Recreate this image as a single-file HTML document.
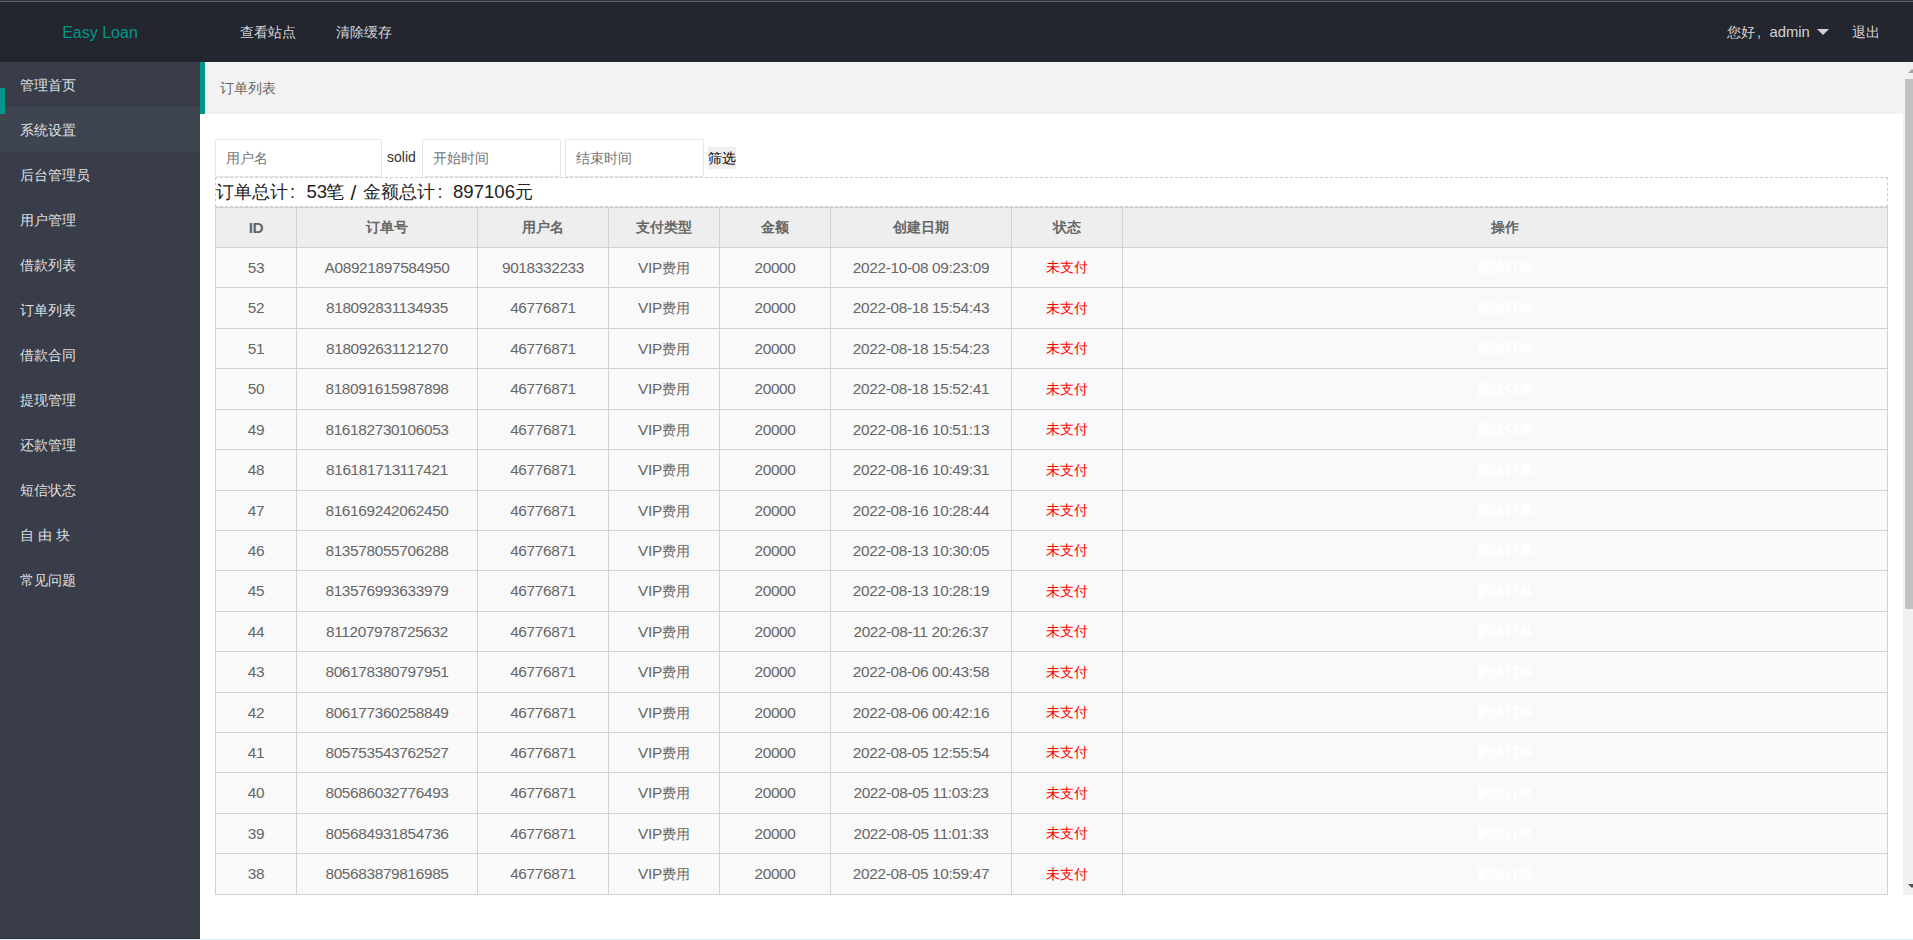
<!DOCTYPE html>
<html><head><meta charset="utf-8"><title>Easy Loan</title>
<style>
*{margin:0;padding:0;box-sizing:border-box;}
html,body{width:1913px;height:940px;overflow:hidden;background:#fff;font-family:"Liberation Sans",sans-serif;font-size:14px;color:#666;}
.abs{position:absolute;}
.topline{position:absolute;left:0;top:0;width:1913px;height:2px;background:#323338;}
.topline2{position:absolute;left:0;top:1px;width:1913px;height:1px;background:#606167;}
.header{position:absolute;left:0;top:2px;width:1913px;height:60px;background:#23262e;}
.logo{position:absolute;left:0;top:1px;width:200px;height:60px;line-height:60px;text-align:center;color:#009688;font-size:16px;}
.nav{position:absolute;top:0;height:60px;line-height:60px;color:rgba(255,255,255,.82);font-size:14px;white-space:nowrap;}
.caret{position:absolute;left:1817px;top:29px;width:0;height:0;border-left:6px solid transparent;border-right:6px solid transparent;border-top:6px solid rgba(255,255,255,.8);}
.side{position:absolute;left:0;top:62px;width:200px;height:878px;background:#393d49;}
.side .item{height:45px;line-height:47px;padding-left:20px;color:rgba(255,255,255,.85);font-size:14px;white-space:nowrap;}
.side .item.hl{background:#3f4451;}
.sidebar-mark{position:absolute;left:0;top:88px;width:5px;height:26px;background:#009688;}
.crumb{position:absolute;left:200px;top:62px;width:1703px;height:52px;background:#f2f2f2;border-left:5px solid #009688;}
.crumb span{position:absolute;left:15px;top:0;line-height:52px;color:#666;font-size:14px;}
.inp{position:absolute;top:139px;height:38px;border:1px solid #e6e6e6;border-radius:2px;background:#fff;}
.inp span{position:absolute;left:10px;top:0;line-height:37px;color:#757575;font-size:14px;white-space:nowrap;}
.solid{position:absolute;left:387px;top:146px;line-height:22px;color:#333;font-size:14px;}
.btn{position:absolute;left:708px;top:147px;width:28px;height:22px;background:#efefef;color:#000;font-size:14px;line-height:22px;text-align:center;}
.dash{position:absolute;left:215px;top:177px;width:1673px;height:30px;border:1px dashed #ccc;}
.total{position:absolute;top:178px;line-height:28px;color:#222;font-size:18px;white-space:nowrap;}
.total.n{font-size:18.6px;}
.thead{position:absolute;left:215px;width:1673px;background:#eee;}
.tbody{position:absolute;left:215px;width:1673px;background:#f9f9f9;}
.hline{position:absolute;left:215px;width:1673px;height:1px;background:#d2d2d2;}
.vl{position:absolute;width:1px;background:#d2d2d2;}
.th{position:absolute;text-align:center;font-weight:bold;color:#666;white-space:nowrap;}
.td{position:absolute;text-align:center;color:#666;white-space:nowrap;}
.red{color:#f00;}
.op{color:#fff;font-size:14px;font-weight:bold;}
.num{font-size:15.4px;letter-spacing:-0.35px;}
.sb-track{position:absolute;left:1903px;top:62px;width:17px;height:833px;background:#f1f1f1;}
.sb-thumb{position:absolute;left:1905px;top:79px;width:13px;height:530px;background:#c1c1c1;}
.sb-up{position:absolute;left:1908px;top:69px;width:0;height:0;border-left:4px solid transparent;border-right:4px solid transparent;border-bottom:4px solid #a3a3a3;}
.sb-down{position:absolute;left:1908px;top:884px;width:0;height:0;border-left:4px solid transparent;border-right:4px solid transparent;border-top:4px solid #505050;}
.bottomline{position:absolute;left:0;top:939px;width:1913px;height:1px;background:#d8edf3;}
.sidebottom{position:absolute;left:0;top:938px;width:200px;height:1px;background:#30333e;}
</style></head>
<body>
<div class="topline"></div><div class="topline2"></div>
<div class="header">
  <div class="logo">Easy Loan</div>
  <div class="nav" style="left:240px">查看站点</div>
  <div class="nav" style="left:336px">清除缓存</div>
  <div class="nav" style="left:1727px">您好<span style="display:inline-block;width:14.5px;padding-left:2px">,</span><span style="font-size:14.8px">admin</span></div>
  <div class="nav" style="left:1852px">退出</div>
</div>
<div class="caret"></div>
<div class="side">
  <div class="item">管理首页</div>
  <div class="item hl">系统设置</div>
  <div class="item">后台管理员</div>
  <div class="item">用户管理</div>
  <div class="item">借款列表</div>
  <div class="item">订单列表</div>
  <div class="item">借款合同</div>
  <div class="item">提现管理</div>
  <div class="item">还款管理</div>
  <div class="item">短信状态</div>
  <div class="item">自 由 块</div>
  <div class="item">常见问题</div>
</div>
<div class="sidebar-mark"></div>
<div class="crumb"><span>订单列表</span></div>
<div class="inp" style="left:215px;width:167px"><span>用户名</span></div>
<div class="solid">solid</div>
<div class="inp" style="left:422px;width:139px"><span>开始时间</span></div>
<div class="inp" style="left:565px;width:139px"><span>结束时间</span></div>
<div class="btn">筛选</div>
<div class="dash"></div>
<div class="total" style="left:216px">订单总计</div>
<div class="total" style="left:290px">:</div>
<div class="total n" style="left:306.5px">53</div>
<div class="total" style="left:326px">笔</div>
<div class="total" style="left:350.5px;font-size:21px;top:179px">/</div>
<div class="total" style="left:362.5px">金额总计</div>
<div class="total" style="left:437.5px">:</div>
<div class="total n" style="left:453px">897106</div>
<div class="total" style="left:515px">元</div>
<div class="sb-track"></div><div class="sb-thumb"></div><div class="sb-up"></div><div class="sb-down"></div>
<div class="sidebottom"></div><div class="bottomline"></div>
<div class="tbl">
<div class="thead" style="top:207px;height:40px"></div>
<div class="tbody" style="top:247px;height:647px"></div>
<div class="hline" style="top:207px"></div>
<div class="hline" style="top:247px"></div>
<div class="hline" style="top:287px"></div>
<div class="hline" style="top:328px"></div>
<div class="hline" style="top:368px"></div>
<div class="hline" style="top:409px"></div>
<div class="hline" style="top:449px"></div>
<div class="hline" style="top:490px"></div>
<div class="hline" style="top:530px"></div>
<div class="hline" style="top:570px"></div>
<div class="hline" style="top:611px"></div>
<div class="hline" style="top:651px"></div>
<div class="hline" style="top:692px"></div>
<div class="hline" style="top:732px"></div>
<div class="hline" style="top:772px"></div>
<div class="hline" style="top:813px"></div>
<div class="hline" style="top:853px"></div>
<div class="hline" style="top:894px"></div>
<div class="vl" style="left:215px;top:207px;height:688px"></div>
<div class="vl" style="left:296px;top:207px;height:688px"></div>
<div class="vl" style="left:477px;top:207px;height:688px"></div>
<div class="vl" style="left:608px;top:207px;height:688px"></div>
<div class="vl" style="left:719px;top:207px;height:688px"></div>
<div class="vl" style="left:830px;top:207px;height:688px"></div>
<div class="vl" style="left:1011px;top:207px;height:688px"></div>
<div class="vl" style="left:1122px;top:207px;height:688px"></div>
<div class="vl" style="left:1887px;top:207px;height:688px"></div>
<div class="th" style="left:216px;width:80px;top:207px;height:40px;line-height:41px"><span class="num">ID</span></div>
<div class="th" style="left:297px;width:180px;top:207px;height:40px;line-height:41px">订单号</div>
<div class="th" style="left:478px;width:130px;top:207px;height:40px;line-height:41px">用户名</div>
<div class="th" style="left:609px;width:110px;top:207px;height:40px;line-height:41px">支付类型</div>
<div class="th" style="left:720px;width:110px;top:207px;height:40px;line-height:41px">金额</div>
<div class="th" style="left:831px;width:180px;top:207px;height:40px;line-height:41px">创建日期</div>
<div class="th" style="left:1012px;width:110px;top:207px;height:40px;line-height:41px">状态</div>
<div class="th" style="left:1123px;width:764px;top:207px;height:40px;line-height:41px">操作</div>
<div class="td" style="left:216px;width:80px;top:247px;height:41px;line-height:41px"><span class="num">53</span></div>
<div class="td" style="left:297px;width:180px;top:247px;height:41px;line-height:41px"><span class="num">A08921897584950</span></div>
<div class="td" style="left:478px;width:130px;top:247px;height:41px;line-height:41px"><span class="num">9018332233</span></div>
<div class="td" style="left:609px;width:110px;top:247px;height:41px;line-height:41px"><span class="num">VIP</span>费用</div>
<div class="td" style="left:720px;width:110px;top:247px;height:41px;line-height:41px"><span class="num">20000</span></div>
<div class="td" style="left:831px;width:180px;top:247px;height:41px;line-height:41px"><span class="num">2022-10-08 09:23:09</span></div>
<div class="td" style="left:1012px;width:110px;top:247px;height:41px;line-height:41px"><span class="red">未支付</span></div>
<div class="td" style="left:1123px;width:764px;top:247px;height:41px;line-height:41px"><span class="op">删除订单</span></div>
<div class="td" style="left:216px;width:80px;top:287px;height:42px;line-height:42px"><span class="num">52</span></div>
<div class="td" style="left:297px;width:180px;top:287px;height:42px;line-height:42px"><span class="num">818092831134935</span></div>
<div class="td" style="left:478px;width:130px;top:287px;height:42px;line-height:42px"><span class="num">46776871</span></div>
<div class="td" style="left:609px;width:110px;top:287px;height:42px;line-height:42px"><span class="num">VIP</span>费用</div>
<div class="td" style="left:720px;width:110px;top:287px;height:42px;line-height:42px"><span class="num">20000</span></div>
<div class="td" style="left:831px;width:180px;top:287px;height:42px;line-height:42px"><span class="num">2022-08-18 15:54:43</span></div>
<div class="td" style="left:1012px;width:110px;top:287px;height:42px;line-height:42px"><span class="red">未支付</span></div>
<div class="td" style="left:1123px;width:764px;top:287px;height:42px;line-height:42px"><span class="op">删除订单</span></div>
<div class="td" style="left:216px;width:80px;top:328px;height:41px;line-height:41px"><span class="num">51</span></div>
<div class="td" style="left:297px;width:180px;top:328px;height:41px;line-height:41px"><span class="num">818092631121270</span></div>
<div class="td" style="left:478px;width:130px;top:328px;height:41px;line-height:41px"><span class="num">46776871</span></div>
<div class="td" style="left:609px;width:110px;top:328px;height:41px;line-height:41px"><span class="num">VIP</span>费用</div>
<div class="td" style="left:720px;width:110px;top:328px;height:41px;line-height:41px"><span class="num">20000</span></div>
<div class="td" style="left:831px;width:180px;top:328px;height:41px;line-height:41px"><span class="num">2022-08-18 15:54:23</span></div>
<div class="td" style="left:1012px;width:110px;top:328px;height:41px;line-height:41px"><span class="red">未支付</span></div>
<div class="td" style="left:1123px;width:764px;top:328px;height:41px;line-height:41px"><span class="op">删除订单</span></div>
<div class="td" style="left:216px;width:80px;top:368px;height:42px;line-height:42px"><span class="num">50</span></div>
<div class="td" style="left:297px;width:180px;top:368px;height:42px;line-height:42px"><span class="num">818091615987898</span></div>
<div class="td" style="left:478px;width:130px;top:368px;height:42px;line-height:42px"><span class="num">46776871</span></div>
<div class="td" style="left:609px;width:110px;top:368px;height:42px;line-height:42px"><span class="num">VIP</span>费用</div>
<div class="td" style="left:720px;width:110px;top:368px;height:42px;line-height:42px"><span class="num">20000</span></div>
<div class="td" style="left:831px;width:180px;top:368px;height:42px;line-height:42px"><span class="num">2022-08-18 15:52:41</span></div>
<div class="td" style="left:1012px;width:110px;top:368px;height:42px;line-height:42px"><span class="red">未支付</span></div>
<div class="td" style="left:1123px;width:764px;top:368px;height:42px;line-height:42px"><span class="op">删除订单</span></div>
<div class="td" style="left:216px;width:80px;top:409px;height:41px;line-height:41px"><span class="num">49</span></div>
<div class="td" style="left:297px;width:180px;top:409px;height:41px;line-height:41px"><span class="num">816182730106053</span></div>
<div class="td" style="left:478px;width:130px;top:409px;height:41px;line-height:41px"><span class="num">46776871</span></div>
<div class="td" style="left:609px;width:110px;top:409px;height:41px;line-height:41px"><span class="num">VIP</span>费用</div>
<div class="td" style="left:720px;width:110px;top:409px;height:41px;line-height:41px"><span class="num">20000</span></div>
<div class="td" style="left:831px;width:180px;top:409px;height:41px;line-height:41px"><span class="num">2022-08-16 10:51:13</span></div>
<div class="td" style="left:1012px;width:110px;top:409px;height:41px;line-height:41px"><span class="red">未支付</span></div>
<div class="td" style="left:1123px;width:764px;top:409px;height:41px;line-height:41px"><span class="op">删除订单</span></div>
<div class="td" style="left:216px;width:80px;top:449px;height:42px;line-height:42px"><span class="num">48</span></div>
<div class="td" style="left:297px;width:180px;top:449px;height:42px;line-height:42px"><span class="num">816181713117421</span></div>
<div class="td" style="left:478px;width:130px;top:449px;height:42px;line-height:42px"><span class="num">46776871</span></div>
<div class="td" style="left:609px;width:110px;top:449px;height:42px;line-height:42px"><span class="num">VIP</span>费用</div>
<div class="td" style="left:720px;width:110px;top:449px;height:42px;line-height:42px"><span class="num">20000</span></div>
<div class="td" style="left:831px;width:180px;top:449px;height:42px;line-height:42px"><span class="num">2022-08-16 10:49:31</span></div>
<div class="td" style="left:1012px;width:110px;top:449px;height:42px;line-height:42px"><span class="red">未支付</span></div>
<div class="td" style="left:1123px;width:764px;top:449px;height:42px;line-height:42px"><span class="op">删除订单</span></div>
<div class="td" style="left:216px;width:80px;top:490px;height:41px;line-height:41px"><span class="num">47</span></div>
<div class="td" style="left:297px;width:180px;top:490px;height:41px;line-height:41px"><span class="num">816169242062450</span></div>
<div class="td" style="left:478px;width:130px;top:490px;height:41px;line-height:41px"><span class="num">46776871</span></div>
<div class="td" style="left:609px;width:110px;top:490px;height:41px;line-height:41px"><span class="num">VIP</span>费用</div>
<div class="td" style="left:720px;width:110px;top:490px;height:41px;line-height:41px"><span class="num">20000</span></div>
<div class="td" style="left:831px;width:180px;top:490px;height:41px;line-height:41px"><span class="num">2022-08-16 10:28:44</span></div>
<div class="td" style="left:1012px;width:110px;top:490px;height:41px;line-height:41px"><span class="red">未支付</span></div>
<div class="td" style="left:1123px;width:764px;top:490px;height:41px;line-height:41px"><span class="op">删除订单</span></div>
<div class="td" style="left:216px;width:80px;top:530px;height:41px;line-height:41px"><span class="num">46</span></div>
<div class="td" style="left:297px;width:180px;top:530px;height:41px;line-height:41px"><span class="num">813578055706288</span></div>
<div class="td" style="left:478px;width:130px;top:530px;height:41px;line-height:41px"><span class="num">46776871</span></div>
<div class="td" style="left:609px;width:110px;top:530px;height:41px;line-height:41px"><span class="num">VIP</span>费用</div>
<div class="td" style="left:720px;width:110px;top:530px;height:41px;line-height:41px"><span class="num">20000</span></div>
<div class="td" style="left:831px;width:180px;top:530px;height:41px;line-height:41px"><span class="num">2022-08-13 10:30:05</span></div>
<div class="td" style="left:1012px;width:110px;top:530px;height:41px;line-height:41px"><span class="red">未支付</span></div>
<div class="td" style="left:1123px;width:764px;top:530px;height:41px;line-height:41px"><span class="op">删除订单</span></div>
<div class="td" style="left:216px;width:80px;top:570px;height:42px;line-height:42px"><span class="num">45</span></div>
<div class="td" style="left:297px;width:180px;top:570px;height:42px;line-height:42px"><span class="num">813576993633979</span></div>
<div class="td" style="left:478px;width:130px;top:570px;height:42px;line-height:42px"><span class="num">46776871</span></div>
<div class="td" style="left:609px;width:110px;top:570px;height:42px;line-height:42px"><span class="num">VIP</span>费用</div>
<div class="td" style="left:720px;width:110px;top:570px;height:42px;line-height:42px"><span class="num">20000</span></div>
<div class="td" style="left:831px;width:180px;top:570px;height:42px;line-height:42px"><span class="num">2022-08-13 10:28:19</span></div>
<div class="td" style="left:1012px;width:110px;top:570px;height:42px;line-height:42px"><span class="red">未支付</span></div>
<div class="td" style="left:1123px;width:764px;top:570px;height:42px;line-height:42px"><span class="op">删除订单</span></div>
<div class="td" style="left:216px;width:80px;top:611px;height:41px;line-height:41px"><span class="num">44</span></div>
<div class="td" style="left:297px;width:180px;top:611px;height:41px;line-height:41px"><span class="num">811207978725632</span></div>
<div class="td" style="left:478px;width:130px;top:611px;height:41px;line-height:41px"><span class="num">46776871</span></div>
<div class="td" style="left:609px;width:110px;top:611px;height:41px;line-height:41px"><span class="num">VIP</span>费用</div>
<div class="td" style="left:720px;width:110px;top:611px;height:41px;line-height:41px"><span class="num">20000</span></div>
<div class="td" style="left:831px;width:180px;top:611px;height:41px;line-height:41px"><span class="num">2022-08-11 20:26:37</span></div>
<div class="td" style="left:1012px;width:110px;top:611px;height:41px;line-height:41px"><span class="red">未支付</span></div>
<div class="td" style="left:1123px;width:764px;top:611px;height:41px;line-height:41px"><span class="op">删除订单</span></div>
<div class="td" style="left:216px;width:80px;top:651px;height:42px;line-height:42px"><span class="num">43</span></div>
<div class="td" style="left:297px;width:180px;top:651px;height:42px;line-height:42px"><span class="num">806178380797951</span></div>
<div class="td" style="left:478px;width:130px;top:651px;height:42px;line-height:42px"><span class="num">46776871</span></div>
<div class="td" style="left:609px;width:110px;top:651px;height:42px;line-height:42px"><span class="num">VIP</span>费用</div>
<div class="td" style="left:720px;width:110px;top:651px;height:42px;line-height:42px"><span class="num">20000</span></div>
<div class="td" style="left:831px;width:180px;top:651px;height:42px;line-height:42px"><span class="num">2022-08-06 00:43:58</span></div>
<div class="td" style="left:1012px;width:110px;top:651px;height:42px;line-height:42px"><span class="red">未支付</span></div>
<div class="td" style="left:1123px;width:764px;top:651px;height:42px;line-height:42px"><span class="op">删除订单</span></div>
<div class="td" style="left:216px;width:80px;top:692px;height:41px;line-height:41px"><span class="num">42</span></div>
<div class="td" style="left:297px;width:180px;top:692px;height:41px;line-height:41px"><span class="num">806177360258849</span></div>
<div class="td" style="left:478px;width:130px;top:692px;height:41px;line-height:41px"><span class="num">46776871</span></div>
<div class="td" style="left:609px;width:110px;top:692px;height:41px;line-height:41px"><span class="num">VIP</span>费用</div>
<div class="td" style="left:720px;width:110px;top:692px;height:41px;line-height:41px"><span class="num">20000</span></div>
<div class="td" style="left:831px;width:180px;top:692px;height:41px;line-height:41px"><span class="num">2022-08-06 00:42:16</span></div>
<div class="td" style="left:1012px;width:110px;top:692px;height:41px;line-height:41px"><span class="red">未支付</span></div>
<div class="td" style="left:1123px;width:764px;top:692px;height:41px;line-height:41px"><span class="op">删除订单</span></div>
<div class="td" style="left:216px;width:80px;top:732px;height:41px;line-height:41px"><span class="num">41</span></div>
<div class="td" style="left:297px;width:180px;top:732px;height:41px;line-height:41px"><span class="num">805753543762527</span></div>
<div class="td" style="left:478px;width:130px;top:732px;height:41px;line-height:41px"><span class="num">46776871</span></div>
<div class="td" style="left:609px;width:110px;top:732px;height:41px;line-height:41px"><span class="num">VIP</span>费用</div>
<div class="td" style="left:720px;width:110px;top:732px;height:41px;line-height:41px"><span class="num">20000</span></div>
<div class="td" style="left:831px;width:180px;top:732px;height:41px;line-height:41px"><span class="num">2022-08-05 12:55:54</span></div>
<div class="td" style="left:1012px;width:110px;top:732px;height:41px;line-height:41px"><span class="red">未支付</span></div>
<div class="td" style="left:1123px;width:764px;top:732px;height:41px;line-height:41px"><span class="op">删除订单</span></div>
<div class="td" style="left:216px;width:80px;top:772px;height:42px;line-height:42px"><span class="num">40</span></div>
<div class="td" style="left:297px;width:180px;top:772px;height:42px;line-height:42px"><span class="num">805686032776493</span></div>
<div class="td" style="left:478px;width:130px;top:772px;height:42px;line-height:42px"><span class="num">46776871</span></div>
<div class="td" style="left:609px;width:110px;top:772px;height:42px;line-height:42px"><span class="num">VIP</span>费用</div>
<div class="td" style="left:720px;width:110px;top:772px;height:42px;line-height:42px"><span class="num">20000</span></div>
<div class="td" style="left:831px;width:180px;top:772px;height:42px;line-height:42px"><span class="num">2022-08-05 11:03:23</span></div>
<div class="td" style="left:1012px;width:110px;top:772px;height:42px;line-height:42px"><span class="red">未支付</span></div>
<div class="td" style="left:1123px;width:764px;top:772px;height:42px;line-height:42px"><span class="op">删除订单</span></div>
<div class="td" style="left:216px;width:80px;top:813px;height:41px;line-height:41px"><span class="num">39</span></div>
<div class="td" style="left:297px;width:180px;top:813px;height:41px;line-height:41px"><span class="num">805684931854736</span></div>
<div class="td" style="left:478px;width:130px;top:813px;height:41px;line-height:41px"><span class="num">46776871</span></div>
<div class="td" style="left:609px;width:110px;top:813px;height:41px;line-height:41px"><span class="num">VIP</span>费用</div>
<div class="td" style="left:720px;width:110px;top:813px;height:41px;line-height:41px"><span class="num">20000</span></div>
<div class="td" style="left:831px;width:180px;top:813px;height:41px;line-height:41px"><span class="num">2022-08-05 11:01:33</span></div>
<div class="td" style="left:1012px;width:110px;top:813px;height:41px;line-height:41px"><span class="red">未支付</span></div>
<div class="td" style="left:1123px;width:764px;top:813px;height:41px;line-height:41px"><span class="op">删除订单</span></div>
<div class="td" style="left:216px;width:80px;top:853px;height:42px;line-height:42px"><span class="num">38</span></div>
<div class="td" style="left:297px;width:180px;top:853px;height:42px;line-height:42px"><span class="num">805683879816985</span></div>
<div class="td" style="left:478px;width:130px;top:853px;height:42px;line-height:42px"><span class="num">46776871</span></div>
<div class="td" style="left:609px;width:110px;top:853px;height:42px;line-height:42px"><span class="num">VIP</span>费用</div>
<div class="td" style="left:720px;width:110px;top:853px;height:42px;line-height:42px"><span class="num">20000</span></div>
<div class="td" style="left:831px;width:180px;top:853px;height:42px;line-height:42px"><span class="num">2022-08-05 10:59:47</span></div>
<div class="td" style="left:1012px;width:110px;top:853px;height:42px;line-height:42px"><span class="red">未支付</span></div>
<div class="td" style="left:1123px;width:764px;top:853px;height:42px;line-height:42px"><span class="op">删除订单</span></div>
</div>
</body></html>
